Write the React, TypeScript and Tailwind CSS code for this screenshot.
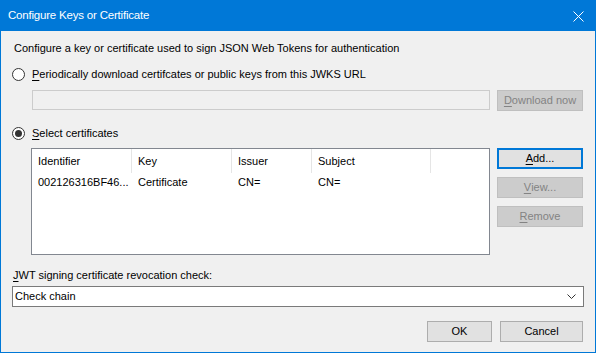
import React from 'react';

const font = { fontFamily: '"Liberation Sans", Arial, sans-serif' };

function Radio({ checked, label, mnemonic }: { checked?: boolean; label: string; mnemonic: string }) {
  return (
    <div className="flex items-center h-[15px]">
      <span className="w-[13px] h-[13px] rounded-full border border-[#333333] bg-white flex items-center justify-center">
        {checked && <span className="w-[7px] h-[7px] rounded-full bg-[#333333]" />}
      </span>
      <span className="ml-[7px]">
        <span className="underline underline-offset-2">{mnemonic}</span>
        {label}
      </span>
    </div>
  );
}

function Btn({
  children,
  disabled,
  focused,
  className = '',
}: {
  children: React.ReactNode;
  disabled?: boolean;
  focused?: boolean;
  className?: string;
}) {
  const look = disabled
    ? 'bg-[#cccccc] border border-[#bfbfbf] text-[#838383]'
    : focused
    ? 'bg-[#e1e1e1] border-2 border-[#0078d7] text-black'
    : 'bg-[#e1e1e1] border border-[#adadad] text-black';
  return (
    <div className={`h-[21px] flex items-center justify-center ${look} ${className}`}>{children}</div>
  );
}

function U({ c }: { c: string }) {
  return <span className="underline underline-offset-2">{c}</span>;
}

export default function App() {
  const cols = [
    { name: 'Identifier', w: 'w-[100px]', val: '002126316BF46...' },
    { name: 'Key', w: 'w-[100px]', val: 'Certificate' },
    { name: 'Issuer', w: 'w-[80px]', val: 'CN=' },
    { name: 'Subject', w: 'w-[119px]', val: 'CN=' },
  ];

  return (
    <div
      className="w-[596px] h-[353px] flex flex-col border border-[#0078d7] bg-[#f0f0f0] text-[11px] text-black"
      style={font}
    >
      {/* Title bar */}
      <div className="h-[30px] bg-[#0078d7] flex items-center justify-between pl-[7px] pr-[10px] text-white">
        <span className="text-[11.5px] tracking-[-0.2px]">Configure Keys or Certificate</span>
        <svg width="11" height="11" viewBox="0 0 11 11" className="mr-[1px]">
          <path d="M0.5 0.5 L10.5 10.5 M10.5 0.5 L0.5 10.5" stroke="white" strokeWidth="1" />
        </svg>
      </div>

      {/* Body */}
      <div className="flex-1 flex flex-col pt-[10px] pl-[11px] pr-[11px] leading-[15px]">
        <div className="pl-[2px] h-[15px]">
          Configure a key or certificate used to sign JSON Web Tokens for authentication
        </div>

        <div className="mt-[11px]">
          <Radio mnemonic="P" label="eriodically download certifcates or public keys from this JWKS URL" />
        </div>

        <div className="mt-[8px] flex items-start pl-[20px]">
          <div className="w-[458px] h-[20px] border border-[#cccccc] bg-[#f0f0f0]" />
          <Btn disabled className="ml-[7px] w-[86px]">
            <U c="D" />
            ownload now
          </Btn>
        </div>

        <div className="mt-[15px]">
          <Radio checked mnemonic="S" label="elect certificates" />
        </div>

        <div className="mt-[7px] flex items-start pl-[19px]">
          <div className="w-[459px] h-[107px] border border-[#828790] bg-white flex flex-col">
            <div className="flex h-[24px]">
              {cols.map((c) => (
                <div key={c.name} className={`${c.w} h-full flex items-center pl-[6px] border-r border-[#e5e5e5]`}>
                  {c.name}
                </div>
              ))}
            </div>
            <div className="flex h-[17px] items-center mt-[1px]">
              {cols.map((c) => (
                <div key={c.name} className={`${c.w} pl-[6px]`}>
                  {c.val}
                </div>
              ))}
            </div>
          </div>
          <div className="ml-[7px] flex flex-col gap-[8px]">
            <Btn focused className="w-[86px]">
              <U c="A" />
              dd...
            </Btn>
            <Btn disabled className="w-[86px]">
              <U c="V" />
              iew...
            </Btn>
            <Btn disabled className="w-[86px]">
              <U c="R" />
              emove
            </Btn>
          </div>
        </div>

        <div className="mt-[13px] pl-[1px] h-[15px]">
          <U c="J" />
          WT signing certificate revocation check:
        </div>

        <div className="mt-[3px] h-[21px] w-[572px] border border-[#7a7a7a] bg-white flex items-center justify-between pl-[2px] pr-[7px]">
          <span>Check chain</span>
          <svg width="9" height="5" viewBox="0 0 9 5">
            <path d="M0.5 0.5 L4.5 4.5 L8.5 0.5" stroke="#333" strokeWidth="1" fill="none" />
          </svg>
        </div>

        <div className="mt-[14px] flex justify-end gap-[8px] pr-[1px]">
          <Btn className="w-[65px]">OK</Btn>
          <Btn className="w-[83px]">Cancel</Btn>
        </div>
      </div>
    </div>
  );
}
